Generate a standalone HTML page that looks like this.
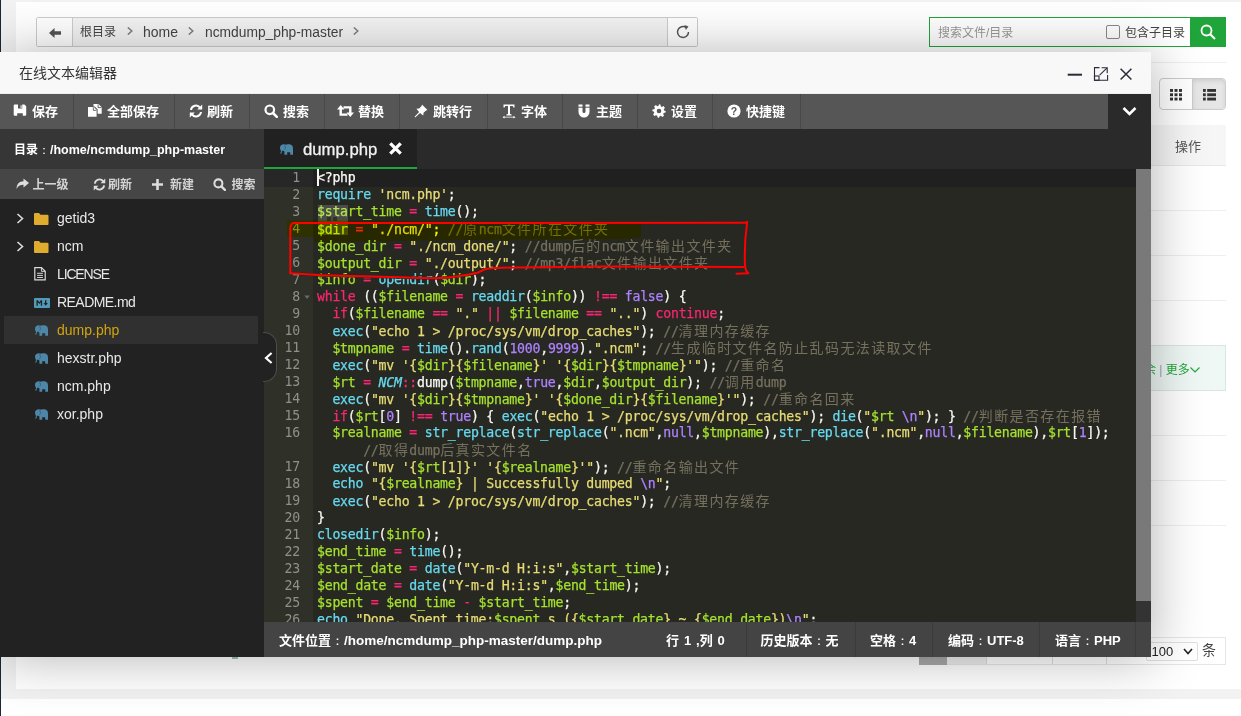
<!DOCTYPE html>
<html lang="zh-CN">
<head>
<meta charset="utf-8">
<title>在线文本编辑器</title>
<style>
*{box-sizing:border-box;margin:0;padding:0}
html,body{width:1241px;height:716px;overflow:hidden}
body{background:#fff;font-family:"Liberation Sans","Noto Sans CJK SC",sans-serif;font-size:12px;color:#333;position:relative}
.abs{position:absolute}
#leftstrip{left:0;top:0;width:1px;height:716px;background:#1d2733}
#pagebg{left:1px;top:0;width:1240px;height:699px;background:#f2f2f2}
#main{left:16px;top:2px;width:1225px;height:687px;background:#fff}
/* path bar */
#pathbar{left:36px;top:17px;width:662px;height:30px;border:1px solid #ccc;border-radius:2px;background:#f3f3f3}
#pathbar .back{left:0;top:0;width:36px;height:28px;background:#fff;border-right:1px solid #ccc}
#pathbar .refresh{right:0;top:0;width:30px;height:28px;background:#fff;border-left:1px solid #ccc}
#pathbar .crumb{top:0;height:28px;line-height:29px;font-size:12px;color:#444}
#search{left:929px;top:17px;width:297px;height:30px;border:1px solid #20a53a;background:#fff}
#search .ph{left:8px;top:0;line-height:30px;font-size:12px;color:#999}
#search .cb{left:176px;top:7px;width:14px;height:14px;border:1px solid #8a8a8a;border-radius:2px;background:#fff}
#search .lb{left:195px;top:0;line-height:30px;font-size:12px;color:#444}
#search .btn{right:-1px;top:-1px;width:36px;height:30px;background:#20a53a}
/* right column of page */
#viewbtn{left:1159px;top:78px;width:67px;height:32px;border:1px solid #ccc;border-radius:4px;background:#fff}
#viewbtn .a{left:0;top:0;width:33px;height:30px;border-right:1px solid #ccc}
#viewbtn .b{left:33px;top:0;width:32px;height:30px;background:#e6e6e6;border-radius:0 3px 3px 0;box-shadow:inset 0 2px 4px rgba(0,0,0,.1)}
#thead{left:1100px;top:125px;width:126px;height:41px;background:#f6f6f6;border-bottom:1px solid #e8e8e8}
.rowline{left:1100px;width:126px;height:1px;background:#eee}
#hover{left:1100px;top:345px;width:126px;height:46px;background:#eff8f5;border-top:1px solid #d6e9e1;border-bottom:1px solid #d6e9e1;border-right:1px solid #d6e9e1}
/* modal */
#modal{left:0;top:52px;width:1151px;height:605px;background:#222;box-shadow:1px 1px 50px rgba(0,0,0,.3)}
#mtitle{left:0;top:0;width:1151px;height:42px;background:#f8f8f8;border-bottom:1px solid #eee;font-size:14px;color:#333;line-height:42px;padding-left:19px}
#tool{left:0;top:42px;width:1108px;height:35px;background:#565656}
#tool .it{top:0;height:35px;border-right:1px solid #484848;color:#fff;font-size:13px;font-weight:bold;line-height:36px;white-space:nowrap}
#tool .it svg{position:absolute;left:12px;top:10px}
#tool .it span{position:absolute;top:0}
#side{left:0;top:77px;width:264px;height:528px;background:#222}
#sidehd{left:0;top:0;width:264px;height:40px;background:#363636;color:#fff;font-size:12px;font-weight:bold;line-height:43px;padding-left:14px;white-space:nowrap}
#sidetb{left:0;top:40px;width:264px;height:30px;background:#464646;color:#d4d4d4;font-size:12px;font-weight:bold;line-height:32px}
#sidetb span{position:absolute;top:0;white-space:nowrap}
.fi{left:4px;width:254px;height:28px;line-height:29px;font-size:14px;color:#e8e8e8;white-space:nowrap}
.fi span{position:absolute;left:53px;top:0}
.fi.sel{background:#303030}
.fi.sel span{color:#d2a50f}
#tabs{left:264px;top:77px;width:887px;height:40px;background:#2a2a2a}
#tab{left:0;top:0;width:153px;height:40px;background:#212121;border-bottom:2px solid #20a53a;color:#f2f2f2;font-size:16.700px;line-height:42px;-webkit-text-stroke:0.3px}
#editor{left:264px;top:116px;width:887px;height:454px;background:#272822;overflow:hidden}
#gutter{left:0;top:0;width:49px;height:454px;background:#2f3129}
#code,#nums{font-family:"DejaVu Sans Mono","Noto Sans CJK SC",monospace;font-size:13.2px;letter-spacing:-0.247px;line-height:17px;color:#f8f8f2}
#code div{white-space:pre}
#nums{left:0;top:1px;width:36px;text-align:right;color:#8f908a}
#code{left:53px;top:1px;-webkit-text-stroke:0.25px}
#code div,#nums div{height:17px}
.k{color:#f92672}.s{color:#e6db74}.v{color:#a6e22e}.f{color:#66d9ef}.n{color:#ae81ff}.c{color:#75715e}.cl{color:#66d9ef;font-style:italic}
.z{-webkit-text-stroke:0;font-weight:normal;font-size:14px;letter-spacing:1.4px;line-height:17px;font-family:"Noto Sans CJK SC",sans-serif}
#status{left:264px;top:570px;width:887px;height:35px;background:#444;color:#fff;font-size:13px;font-weight:bold;line-height:37px}
#status u,#sidehd u{text-decoration:none;font-family:"WenQuanYi Zen Hei",sans-serif}
#status em{font-style:normal}
#status span{position:absolute;top:0;white-space:nowrap}
#status i{position:absolute;top:0;width:1px;height:35px;background:#3a3a3a}
</style>
</head>
<body>
<div id="pagebg" class="abs"></div>
<div id="leftstrip" class="abs"></div>
<div id="main" class="abs"></div>

<div id="pathbar" class="abs">
  <div class="back abs"><svg class="abs" style="left:12px;top:9.500px" width="12" height="10" viewBox="0 0 13 11" preserveAspectRatio="none"><path d="M0 5.5 L6 0 V3.6 H13 V7.4 H6 V11 Z" fill="#555"/></svg></div>
  <div class="crumb abs" style="left:43px">根目录</div>
  <svg class="abs" style="left:90px;top:9.300px" width="6" height="8" viewBox="0 0 6 8"><path d="M0.800 0.400 L4.800 4 L0.800 7.600" fill="none" stroke="#808080" stroke-width="1.500"/></svg>
  <div class="crumb abs" style="left:106px;font-size:14px">home</div>
  <svg class="abs" style="left:151px;top:9.300px" width="6" height="8" viewBox="0 0 6 8"><path d="M0.800 0.400 L4.800 4 L0.800 7.600" fill="none" stroke="#808080" stroke-width="1.500"/></svg>
  <div class="crumb abs" style="left:168px;font-size:13.800px">ncmdump_php-master</div>
  <svg class="abs" style="left:315.500px;top:9.300px" width="6" height="8" viewBox="0 0 6 8"><path d="M0.800 0.400 L4.800 4 L0.800 7.600" fill="none" stroke="#808080" stroke-width="1.500"/></svg>
  <div class="refresh abs"><svg class="abs" style="left:7px;top:6px" width="16" height="16" viewBox="0 0 16 16"><path d="M13.5 8 A5.5 5.5 0 1 1 11.2 3.5" fill="none" stroke="#555" stroke-width="1.5"/><path d="M9.5 1 L13.5 2.6 L10.8 6 Z" fill="#555"/></svg></div>
</div>

<div id="search" class="abs">
  <div class="ph abs">搜索文件/目录</div>
  <div class="cb abs"></div>
  <div class="lb abs">包含子目录</div>
  <div class="btn abs"><svg class="abs" style="left:10px;top:7px" width="16" height="16" viewBox="0 0 16 16"><circle cx="6.5" cy="6.5" r="5" fill="none" stroke="#fff" stroke-width="1.8"/><path d="M10.2 10.2 L15 15" stroke="#fff" stroke-width="2"/></svg></div>
</div>

<div id="viewbtn" class="abs">
  <div class="a abs"><svg class="abs" style="left:10px;top:10px" width="12" height="11.500" viewBox="0 0 12 12" preserveAspectRatio="none"><g fill="#333"><rect x="0" y="0" width="3" height="3"/><rect x="4.5" y="0" width="3" height="3"/><rect x="9" y="0" width="3" height="3"/><rect x="0" y="4.5" width="3" height="3"/><rect x="4.5" y="4.5" width="3" height="3"/><rect x="9" y="4.5" width="3" height="3"/><rect x="0" y="9" width="3" height="3"/><rect x="4.5" y="9" width="3" height="3"/><rect x="9" y="9" width="3" height="3"/></g></svg></div>
  <div class="b abs"><svg class="abs" style="left:10px;top:10px" width="13" height="11.500" viewBox="0 0 14 12" preserveAspectRatio="none"><g fill="#333"><rect x="0" y="0" width="3" height="3"/><rect x="4.5" y="0" width="9.5" height="3"/><rect x="0" y="4.5" width="3" height="3"/><rect x="4.5" y="4.5" width="9.5" height="3"/><rect x="0" y="9" width="3" height="3"/><rect x="4.5" y="9" width="9.5" height="3"/></g></svg></div>
</div>
<div class="abs" style="left:1100px;top:62px;width:126px;height:1px;background:#eee"></div>
<div id="thead" class="abs"><div class="abs" style="left:75px;top:0;line-height:44px;font-size:13px;color:#555">操作</div></div>
<div class="rowline abs" style="top:210px"></div>
<div class="rowline abs" style="top:255px"></div>
<div class="rowline abs" style="top:300px"></div>
<div id="hover" class="abs"><div class="abs" style="left:44px;top:0;line-height:48px;font-size:12px;color:#20a53a;white-space:nowrap">余 <span style="color:#8ab">|</span> 更多</div><svg class="abs" style="left:90px;top:21px" width="10" height="6" viewBox="0 0 10 6"><path d="M0.5 0.5 L5 5 L9.500 0.500" fill="none" stroke="#20a53a" stroke-width="1.1"/></svg></div>
<div class="rowline abs" style="top:435px"></div>
<div class="rowline abs" style="top:480px"></div>
<div class="rowline abs" style="top:525px"></div>
<!-- pagination remnants -->
<div class="abs" style="left:919px;top:637px;width:307px;height:28px;border:1px solid #e6e6e6;background:#fff"></div>
<div class="abs" style="left:919px;top:637px;width:28px;height:28px;background:#a8a8a8"></div>
<div class="abs" style="left:947px;top:657px;width:40px;height:7px;background:#eee;border-right:1px solid #ddd"></div>
<div class="abs" style="left:987px;top:657px;width:66px;height:7px;border-right:1px solid #ddd"></div>
<div class="abs" style="left:1053px;top:657px;width:54px;height:7px;border-right:1px solid #ddd"></div>
<div class="abs" style="left:1146px;top:642px;width:52px;height:19px;border:1px solid #e0e0e0;border-radius:2px;background:#fff"><div class="abs" style="left:4.500px;top:0;line-height:17px;font-size:13px;color:#222">100</div><svg class="abs" style="left:36px;top:5px" width="10" height="7" viewBox="0 0 10 7"><path d="M1 1 L5 5.5 L9 1" fill="none" stroke="#222" stroke-width="1.6"/></svg></div>
<div class="abs" style="left:1202px;top:640px;line-height:21px;font-size:14px;color:#444">条</div>
<div class="abs" style="left:232px;top:655px;width:6px;height:4px;background:#5a9a8a;opacity:.6"></div>

<div id="modal" class="abs">
  <div id="mtitle" class="abs">在线文本编辑器</div>
  <!-- window buttons -->
  <svg class="abs" style="left:1067px;top:14px" width="70" height="16" viewBox="0 0 70 16">
    <rect x="0.7" y="7.700" width="14.300" height="2" fill="#2a2a3a"/>
    <g fill="none" stroke="#2a2a3a" stroke-width="1.1"><path d="M32.5 1.600 H27.500 V14.300 H40.600 V9"/><rect x="27.500" y="10" width="4.500" height="4.300"/><path d="M32.600 9.200 L39.800 2.200"/><path d="M34.600 1.800 H40.200 V7.300"/></g>
    <path d="M53.600 2.700 L64.400 13.500 M64.400 2.700 L53.600 13.500" stroke="#2a2a3a" stroke-width="1.500"/>
  </svg>

  <div id="tool" class="abs">
    <div class="it abs" style="left:0;width:74px"><svg width="14" height="14" viewBox="0 0 14 14" style="left:13px"><path d="M1.7 0.5 H11.400 L13.200 2.300 V10.800 Q13.200 11.800 12.200 11.800 H1.700 Q0.700 11.800 0.700 10.800 V1.500 Q0.700 0.500 1.700 0.500 Z M5 0.500 V4.600 H9.200 V0.500 Z M7.600 1.200 H8.600 V3.900 H7.600 Z M4.200 9.200 V11.800 H9.800 V9.200 Z" fill="#fff" fill-rule="evenodd"/></svg><span style="left:32px">保存</span></div>
    <div class="it abs" style="left:74px;width:101px"><svg width="14" height="14" viewBox="0 0 14 14" style="left:14px"><path d="M0 3 H5.800 L8.600 5.800 V12.800 H0 Z M5.500 0 H10.500 L13.700 3.200 V9.800 H9.600 V5.300 L6.700 2.400 H5.500 Z" fill="#fff"/><path d="M5.300 3.300 V6.300 H8.300 M10.100 0.400 V3.600 H13.400" stroke="#565656" stroke-width="0.900" fill="none"/></svg><span style="left:33px">全部保存</span></div>
    <div class="it abs" style="left:175px;width:75px"><svg width="14" height="14" viewBox="0 0 14 14" style="left:14px"><g fill="none" stroke="#fff" stroke-width="2"><path d="M2 6 A5 5 0 0 1 11 3.6"/><path d="M12 8 A5 5 0 0 1 3 10.4"/></g><path d="M13.2 0.6 V5.6 H8.2 Z M0.8 13.4 V8.4 H5.8 Z" fill="#fff"/></svg><span style="left:32px">刷新</span></div>
    <div class="it abs" style="left:250px;width:75px"><svg width="14" height="14" viewBox="0 0 14 14" style="left:14px"><circle cx="5.8" cy="5.8" r="4.3" fill="none" stroke="#fff" stroke-width="2.2"/><path d="M9 9 L12.8 12.8" stroke="#fff" stroke-width="2.6" stroke-linecap="round"/></svg><span style="left:33px">搜索</span></div>
    <div class="it abs" style="left:325px;width:75px"><svg width="17" height="14" viewBox="0 0 17 14" style="left:12px"><path d="M0 5.500 L3.700 1 L7.400 5.500 H4.900 V9.400 H10.500 V11.800 H2.500 V5.500 Z M6.500 2.200 H14.500 V8.500 H17 L13.300 13 L9.600 8.500 H12.100 V4.600 H6.500 Z" fill="#fff"/></svg><span style="left:33px">替换</span></div>
    <div class="it abs" style="left:400px;width:88px"><svg width="14" height="14" viewBox="0 0 14 14" style="left:14px"><path d="M8 0.5 L13.5 6 L12 6.4 L9.6 8.8 L9.2 11.6 L6 8.9 L1.2 13.4 L0.6 12.8 L5.1 8 L2.4 4.8 L5.2 4.4 L7.6 2 Z" fill="#fff"/></svg><span style="left:33px">跳转行</span></div>
    <div class="it abs" style="left:488px;width:75px"><svg width="14" height="15" viewBox="0 0 14 15" style="left:14px;top:10px"><path d="M1.5 0.5 H12.5 V3.6 H11.4 L10.8 2 H8 V10 L9.6 10.6 V11.4 H4.4 V10.6 L6 10 V2 H3.2 L2.6 3.6 H1.5 Z" fill="#fff"/><path d="M0.5 13.2 L2.5 11.8 V12.8 H11.5 V11.8 L13.5 13.2 L11.5 14.6 V13.6 H2.5 V14.6 Z" fill="#fff"/></svg><span style="left:33px">字体</span></div>
    <div class="it abs" style="left:563px;width:75px"><svg width="12" height="14" viewBox="0 0 12 14" style="left:15px"><path d="M0.5 0.5 H4.5 V7.5 A1.5 1.5 0 0 0 7.5 7.500 V0.5 H11.5 V8 A5.5 5.5 0 0 1 0.5 8 Z" fill="#fff"/><path d="M0 3.2 H12" stroke="#565656" stroke-width="1"/></svg><span style="left:33px">主题</span></div>
    <div class="it abs" style="left:638px;width:75px"><svg width="14" height="14" viewBox="0 0 14 14" style="left:14px"><path d="M7 0.3 L8.4 0.5 L8.8 2.3 L9.9 2.9 L11.6 2.1 L12.9 3.9 L11.8 5.2 L12 6.4 L13.7 7 L13.5 8.6 L11.8 9 L11.2 10 L12 11.7 L10.3 12.9 L8.9 11.8 L7.8 12 L7 13.7 L5.6 13.5 L5.2 11.8 L4.1 11.2 L2.4 12 L1.1 10.3 L2.2 8.9 L2 7.8 L0.3 7 L0.5 5.6 L2.3 5.2 L2.9 4.1 L2.1 2.4 L3.9 1.1 L5.2 2.2 L6.4 2 Z M7 4.7 A2.3 2.3 0 1 0 7 9.3 A2.3 2.3 0 1 0 7 4.7 Z" fill="#fff" fill-rule="evenodd"/></svg><span style="left:33px">设置</span></div>
    <div class="it abs" style="left:713px;width:88px"><svg width="14" height="14" viewBox="0 0 14 14" style="left:14px"><circle cx="7" cy="7" r="6.6" fill="#fff"/><text x="7" y="11" font-size="10.500" font-weight="bold" text-anchor="middle" fill="#565656" font-family="Liberation Sans, sans-serif">?</text></svg><span style="left:33px">快捷键</span></div>
  </div>
  <div class="abs" style="left:1108px;top:42px;width:43px;height:35px;background:#2a2a2a"></div>
  <svg class="abs" style="left:1122px;top:54px" width="15" height="11" viewBox="0 0 15 11"><path d="M1.5 2 L7.500 8 L13.500 2" fill="none" stroke="#fff" stroke-width="2.600"/></svg>

  <div id="side" class="abs">
    <div id="sidehd" class="abs">目录<u>：</u><span style="font-size:12.5px">/home/ncmdump_php-master</span></div>
    <div id="sidetb" class="abs">
      <svg class="abs" style="left:16px;top:9px" width="13" height="12" viewBox="0 0 13 12"><path d="M7.500 0.5 L13 5 L7.500 9.500 V6.800 C4 6.800 2 8 0.5 11 C0.700 6 3 3.400 7.500 3.200 Z" fill="#ddd"/></svg><span style="left:32.5px">上一级</span>
      <svg class="abs" style="left:93px;top:9px" width="13" height="13" viewBox="0 0 14 14"><g fill="none" stroke="#ddd" stroke-width="2"><path d="M2 6 A5 5 0 0 1 11 3.600"/><path d="M12 8 A5 5 0 0 1 3 10.400"/></g><path d="M13.200 0.600 V5.600 H8.200 Z M0.800 13.400 V8.400 H5.800 Z" fill="#ddd"/></svg><span style="left:108px">刷新</span>
      <svg class="abs" style="left:152px;top:10px" width="11" height="11" viewBox="0 0 11 11"><path d="M4.200 0 H6.800 V4.200 H11 V6.800 H6.800 V11 H4.200 V6.800 H0 V4.200 H4.200 Z" fill="#ddd"/></svg><span style="left:170px">新建</span>
      <svg class="abs" style="left:213px;top:9px" width="13" height="13" viewBox="0 0 14 14"><circle cx="5.800" cy="5.800" r="4.300" fill="none" stroke="#ddd" stroke-width="2.200"/><path d="M9 9 L12.800 12.800" stroke="#ddd" stroke-width="2.600" stroke-linecap="round"/></svg><span style="left:231.5px">搜索</span>
    </div>
    <div id="files">
<div class="fi abs" style="top:75px"><svg class="abs" style="left:12px;top:8.500px" width="9" height="11" viewBox="0 0 9 11"><path d="M1.500 1 L6.500 5.500 L1.500 10" fill="none" stroke="#ddd" stroke-width="1.600"/></svg><svg class="abs" style="left:30px;top:8.500px" width="14.500" height="12" viewBox="0 0 16 13" preserveAspectRatio="none"><path d="M0 1.200 Q0 0 1.200 0 H5.500 L7.200 2 H14.800 Q16 2 16 3.200 V11.800 Q16 13 14.800 13 H1.200 Q0 13 0 11.800 Z" fill="#dfac30"/></svg><span>getid3</span></div>
<div class="fi abs" style="top:103px"><svg class="abs" style="left:12px;top:8.500px" width="9" height="11" viewBox="0 0 9 11"><path d="M1.500 1 L6.500 5.500 L1.500 10" fill="none" stroke="#ddd" stroke-width="1.600"/></svg><svg class="abs" style="left:30px;top:8.500px" width="14.500" height="12" viewBox="0 0 16 13" preserveAspectRatio="none"><path d="M0 1.200 Q0 0 1.200 0 H5.500 L7.200 2 H14.800 Q16 2 16 3.200 V11.800 Q16 13 14.800 13 H1.200 Q0 13 0 11.800 Z" fill="#dfac30"/></svg><span>ncm</span></div>
<div class="fi abs" style="top:131px"><svg class="abs" style="left:30px;top:7px" width="12" height="13.500" viewBox="0 0 12 14"><path d="M0.600 0.600 H7.500 L11.400 4.500 V13.400 H0.600 Z" fill="none" stroke="#ddd" stroke-width="1.200"/><path d="M7.500 0.600 V4.500 H11.400" fill="none" stroke="#ddd" stroke-width="1"/><path d="M3 6.500 H9 M3 8.700 H9 M3 10.900 H9" stroke="#ddd" stroke-width="1"/></svg><span style="letter-spacing:-1.15px">LICENSE</span></div>
<div class="fi abs" style="top:159px"><svg class="abs" style="left:30px;top:9.500px" width="16" height="10" viewBox="0 0 16 10"><rect x="0" y="0" width="16" height="10" rx="1" fill="#519aba"/><path d="M2.500 7.700 V2.300 H3.800 L5.300 4.300 L6.800 2.300 H8.100 V7.700 H6.800 V4.300 L5.300 6.100 L3.800 4.300 V7.700 Z M11 2.300 H12.400 V5 H13.900 L11.700 7.800 L9.500 5 H11 Z" fill="#222"/></svg><span style="letter-spacing:-0.55px">README.md</span></div>
<div class="fi abs sel" style="top:187px"><svg class="abs" style="left:29.500px;top:9px" width="14" height="11" viewBox="0 0 14 11"><path d="M1 4 C1 1.500 2.500 0.300 5 0.300 C6 0.300 6.500 0.500 7 0.800 C8 0.300 9.500 0.200 10.500 0.300 C12.800 0.500 14 2 14 4.500 V10.700 H11.200 V8.200 H8.200 V10.700 H5.400 V7.600 C4.800 7.400 4.300 7 4 6.600 C3.600 7 3.200 7.200 2.800 7.200 V8.300 C2.800 9.600 1.600 9.800 0.900 9.200 L1.400 8.500 C1.700 8.700 1.900 8.500 1.900 8.200 V6.500 C1.300 6 1 5.200 1 4 Z" fill="#4d86a6"/><path d="M5.200 1.500 C6.800 2 7 4.500 5.600 5.600" fill="none" stroke="#2d566e" stroke-width="0.700"/></svg><span>dump.php</span></div>
<div class="fi abs" style="top:215px"><svg class="abs" style="left:29.500px;top:9px" width="14" height="11" viewBox="0 0 14 11"><path d="M1 4 C1 1.500 2.500 0.300 5 0.300 C6 0.300 6.500 0.500 7 0.800 C8 0.300 9.500 0.200 10.500 0.300 C12.800 0.500 14 2 14 4.500 V10.700 H11.200 V8.200 H8.200 V10.700 H5.400 V7.600 C4.800 7.400 4.300 7 4 6.600 C3.600 7 3.200 7.200 2.800 7.200 V8.300 C2.800 9.600 1.600 9.800 0.900 9.200 L1.400 8.500 C1.700 8.700 1.900 8.500 1.900 8.200 V6.500 C1.300 6 1 5.200 1 4 Z" fill="#4d86a6"/><path d="M5.200 1.500 C6.800 2 7 4.500 5.600 5.600" fill="none" stroke="#2d566e" stroke-width="0.700"/></svg><span>hexstr.php</span></div>
<div class="fi abs" style="top:243px"><svg class="abs" style="left:29.500px;top:9px" width="14" height="11" viewBox="0 0 14 11"><path d="M1 4 C1 1.500 2.500 0.300 5 0.300 C6 0.300 6.500 0.500 7 0.800 C8 0.300 9.500 0.200 10.500 0.300 C12.800 0.500 14 2 14 4.500 V10.700 H11.200 V8.200 H8.200 V10.700 H5.400 V7.600 C4.800 7.400 4.300 7 4 6.600 C3.600 7 3.200 7.200 2.800 7.200 V8.300 C2.800 9.600 1.600 9.800 0.900 9.200 L1.400 8.500 C1.700 8.700 1.900 8.500 1.900 8.200 V6.500 C1.300 6 1 5.200 1 4 Z" fill="#4d86a6"/><path d="M5.200 1.500 C6.800 2 7 4.500 5.600 5.600" fill="none" stroke="#2d566e" stroke-width="0.700"/></svg><span>ncm.php</span></div>
<div class="fi abs" style="top:271px"><svg class="abs" style="left:29.500px;top:9px" width="14" height="11" viewBox="0 0 14 11"><path d="M1 4 C1 1.500 2.500 0.300 5 0.300 C6 0.300 6.500 0.500 7 0.800 C8 0.300 9.500 0.200 10.500 0.300 C12.800 0.500 14 2 14 4.500 V10.700 H11.200 V8.200 H8.200 V10.700 H5.400 V7.600 C4.800 7.400 4.300 7 4 6.600 C3.600 7 3.200 7.200 2.800 7.200 V8.300 C2.800 9.600 1.600 9.800 0.900 9.200 L1.400 8.500 C1.700 8.700 1.900 8.500 1.900 8.200 V6.500 C1.300 6 1 5.200 1 4 Z" fill="#4d86a6"/><path d="M5.200 1.500 C6.800 2 7 4.500 5.600 5.600" fill="none" stroke="#2d566e" stroke-width="0.700"/></svg><span>xor.php</span></div>
</div>
  </div>

  <div id="editor" class="abs">
    <div id="gutter" class="abs"></div>
    <div class="abs" style="left:872px;top:0;width:15px;height:454px;background:#333"></div>
    <div class="abs" style="left:872px;top:0;width:15px;height:433px;background:#797979"></div>
    <div class="abs" style="left:0;top:1px;width:872px;height:17.500px;background:#202020"></div>
    <div class="abs" style="left:0;top:1px;width:49px;height:17.500px;background:#272727"></div>
    <div id="nums" class="abs">
<div>1</div>
<div>2</div>
<div>3</div>
<div>4</div>
<div>5</div>
<div>6</div>
<div>7</div>
<div>8</div>
<div>9</div>
<div>10</div>
<div>11</div>
<div>12</div>
<div>13</div>
<div>14</div>
<div>15</div>
<div>16</div>
<div></div>
<div>17</div>
<div>18</div>
<div>19</div>
<div>20</div>
<div>21</div>
<div>22</div>
<div>23</div>
<div>24</div>
<div>25</div>
<div>26</div>
</div>
    <div id="code" class="abs">
<div>&lt;?php</div>
<div><span class="f">require</span> <span class="s">'ncm.php'</span>;</div>
<div><span class="v">$start_time</span> <span class="k">=</span> <span class="f">time</span>();</div>
<div><span class="v">$dir</span> <span class="k">=</span> <span class="s">"./ncm/"</span>; <span class="c">//<b class="z">原</b>ncm<b class="z">文件所在文件夹</b></span></div>
<div><span class="v">$done_dir</span> <span class="k">=</span> <span class="s">"./ncm_done/"</span>; <span class="c">//dump<b class="z">后的</b>ncm<b class="z">文件输出文件夹</b></span></div>
<div><span class="v">$output_dir</span> <span class="k">=</span> <span class="s">"./output/"</span>; <span class="c">//mp3/flac<b class="z">文件输出文件夹</b></span></div>
<div><span class="v">$info</span> <span class="k">=</span> <span class="f">opendir</span>(<span class="v">$dir</span>);</div>
<div><span class="k">while</span> ((<span class="v">$filename</span> <span class="k">=</span> <span class="f">readdir</span>(<span class="v">$info</span>)) <span class="k">!==</span> <span class="n">false</span>) {</div>
<div>  <span class="k">if</span>(<span class="v">$filename</span> <span class="k">==</span> <span class="s">"."</span> <span class="k">||</span> <span class="v">$filename</span> <span class="k">==</span> <span class="s">".."</span>) <span class="k">continue</span>;</div>
<div>  <span class="f">exec</span>(<span class="s">"echo 1 &gt; /proc/sys/vm/drop_caches"</span>); <span class="c">//<b class="z">清理内存缓存</b></span></div>
<div>  <span class="v">$tmpname</span> <span class="k">=</span> <span class="f">time</span>().<span class="f">rand</span>(<span class="n">1000</span>,<span class="n">9999</span>).<span class="s">".ncm"</span>; <span class="c">//<b class="z">生成临时文件名防止乱码无法读取文件</b></span></div>
<div>  <span class="f">exec</span>(<span class="s">"mv '{</span><span class="v">$dir</span><span class="s">}{</span><span class="v">$filename</span><span class="s">}' '{</span><span class="v">$dir</span><span class="s">}{</span><span class="v">$tmpname</span><span class="s">}'"</span>); <span class="c">//<b class="z">重命名</b></span></div>
<div>  <span class="v">$rt</span> <span class="k">=</span> <span class="cl">NCM</span><span class="k">::</span>dump(<span class="v">$tmpname</span>,<span class="n">true</span>,<span class="v">$dir</span>,<span class="v">$output_dir</span>); <span class="c">//<b class="z">调用</b>dump</span></div>
<div>  <span class="f">exec</span>(<span class="s">"mv '{</span><span class="v">$dir</span><span class="s">}{</span><span class="v">$tmpname</span><span class="s">}' '{</span><span class="v">$done_dir</span><span class="s">}{</span><span class="v">$filename</span><span class="s">}'"</span>); <span class="c">//<b class="z">重命名回来</b></span></div>
<div>  <span class="k">if</span>(<span class="v">$rt</span>[<span class="n">0</span>] <span class="k">!==</span> <span class="n">true</span>) { <span class="f">exec</span>(<span class="s">"echo 1 &gt; /proc/sys/vm/drop_caches"</span>); <span class="f">die</span>(<span class="s">"</span><span class="v">$rt</span><span class="s"> </span><span class="n">\n</span><span class="s">"</span>); } <span class="c">//<b class="z">判断是否存在报错</b></span></div>
<div>  <span class="v">$realname</span> <span class="k">=</span> <span class="f">str_replace</span>(<span class="f">str_replace</span>(<span class="s">".ncm"</span>,<span class="n">null</span>,<span class="v">$tmpname</span>),<span class="f">str_replace</span>(<span class="s">".ncm"</span>,<span class="n">null</span>,<span class="v">$filename</span>),<span class="v">$rt</span>[<span class="n">1</span>]);</div>
<div>      <span class="c">//<b class="z">取得</b>dump<b class="z">后真实文件名</b></span></div>
<div>  <span class="f">exec</span>(<span class="s">"mv '{</span><span class="v">$rt</span><span class="s">[1]}' '{</span><span class="v">$realname</span><span class="s">}'"</span>); <span class="c">//<b class="z">重命名输出文件</b></span></div>
<div>  <span class="f">echo</span> <span class="s">"{</span><span class="v">$realname</span><span class="s">} | Successfully dumped </span><span class="n">\n</span><span class="s">"</span>;</div>
<div>  <span class="f">exec</span>(<span class="s">"echo 1 &gt; /proc/sys/vm/drop_caches"</span>); <span class="c">//<b class="z">清理内存缓存</b></span></div>
<div>}</div>
<div><span class="f">closedir</span>(<span class="v">$info</span>);</div>
<div><span class="v">$end_time</span> <span class="k">=</span> <span class="f">time</span>();</div>
<div><span class="v">$start_date</span> <span class="k">=</span> <span class="f">date</span>(<span class="s">"Y-m-d H:i:s"</span>,<span class="v">$start_time</span>);</div>
<div><span class="v">$end_date</span> <span class="k">=</span> <span class="f">date</span>(<span class="s">"Y-m-d H:i:s"</span>,<span class="v">$end_time</span>);</div>
<div><span class="v">$spent</span> <span class="k">=</span> <span class="v">$end_time</span> <span class="k">-</span> <span class="v">$start_time</span>;</div>
<div><span class="f">echo</span> <span class="s">"Done. Spent time:</span><span class="v">$spent</span><span class="s"> s ({</span><span class="v">$start_date</span><span class="s">} ~ {</span><span class="v">$end_date</span><span class="s">})</span><span class="n">\n</span><span class="s">"</span>;</div>
</div>
    <div class="abs" style="left:53px;top:1px;width:2px;height:17px;background:#f8f8f0"></div>
    <svg class="abs" style="left:39.500px;top:127px" width="7" height="5.500" viewBox="0 0 8 6"><path d="M0.5 0.500 H6.500 L3.500 4.500 Z" fill="#6b6c66"/></svg>
    <div class="abs" style="left:54px;top:37px;width:30px;height:30px;background:rgba(255,255,255,.17)"></div>
    <div class="abs" style="left:63px;top:49px;width:4px;height:4px;background:rgba(0,0,0,.35)"></div>
    <div class="abs" style="left:69px;top:49px;width:4px;height:4px;background:rgba(0,0,0,.35)"></div>
    <div class="abs" style="left:23.0px;top:52.0px;width:354.0px;height:22.0px;background:#ffff00;mix-blend-mode:multiply;clip-path:polygon(0.0px 0.0px,354.0px 3.0px,354.0px 17.5px,338.0px 19.0px,133.0px 20.5px,27.0px 22.0px,27.0px 17.0px,0.0px 17.0px)"></div>
    <svg class="abs" style="left:0;top:0" width="887" height="454" viewBox="264 168 887 454">
      <path d="M300,274 L322.700,275.200 L361.400,276.300 L400,277.200 L430,278.200 Q446,278.600 459.300,275.900 Q470,274.500 477.400,272.700 Q481,271.300 484,269.600" fill="none" stroke="#272822" stroke-width="3"/>
      <g fill="none" stroke="#ff0000" stroke-width="2" stroke-linejoin="round" stroke-linecap="round">
        <path d="M290.3,273.300 L290.300,229 Q290.300,223.200 294,223 L747,222.800"/>
        <path d="M747.200,221.800 C745.300,235 744.300,250 745,265.500 C745.300,270 746.500,272 748.300,273.200 L736.500,273.700"/>
        <path d="M290.3,273.300 L322.700,275.200 L361.400,276.300 L400,277.200 L430,278.200 Q446,278.600 459.300,275.900 Q470,274.500 477.400,272.700 Q481,271.300 484,269.600 Q488,268.300 494,267.900 L517,267.500 L600,266.600 L743.500,267.100"/>
      </g>
    </svg>
  </div>
  <div id="tabs" class="abs">
    <div id="tab" class="abs"><svg class="abs" style="left:15px;top:14.500px" width="14" height="11" viewBox="0 0 14 11"><path d="M1 4 C1 1.500 2.500 0.300 5 0.300 C6 0.300 6.500 0.500 7 0.800 C8 0.300 9.500 0.200 10.500 0.300 C12.800 0.500 14 2 14 4.500 V10.700 H11.200 V8.200 H8.200 V10.700 H5.400 V7.600 C4.800 7.400 4.300 7 4 6.600 C3.600 7 3.200 7.200 2.800 7.200 V8.300 C2.800 9.600 1.600 9.800 0.900 9.200 L1.400 8.500 C1.700 8.700 1.900 8.500 1.900 8.200 V6.500 C1.300 6 1 5.200 1 4 Z" fill="#4d86a6"/><path d="M5.200 1.500 C6.800 2 7 4.500 5.600 5.600" fill="none" stroke="#2d566e" stroke-width="0.700"/></svg><span class="abs" style="left:39px;top:0">dump.php</span>
      <svg class="abs" style="left:124.500px;top:13px" width="13" height="13" viewBox="0 0 13 13"><path d="M1.300 1.300 L11.700 11.700 M11.700 1.300 L1.300 11.700" stroke="#fff" stroke-width="3.300"/></svg>
    </div>
  </div>

  <div class="abs" style="left:263px;top:280px;width:14px;height:50px;background:#222;border:1px solid #4c4c4c;border-left:none;border-radius:0 13px 13px 0"><svg class="abs" style="left:1px;top:19px" width="9" height="12" viewBox="0 0 9 12"><path d="M7.600 1 L2 6 L7.600 11" fill="none" stroke="#fff" stroke-width="2.200"/></svg></div>
  <div id="status" class="abs">
<span style="left:15px">文件位置<u>：</u><em style="font-size:13.5px">/home/ncmdump_php-master/dump.php</em></span>
<span style="left:402px;word-spacing:1.3px">行 1 ,列 0</span>
<span style="left:496.5px">历史版本<u>：</u>无</span><i style="left:482px"></i>
<span style="left:606px">空格<u>：</u>4</span><i style="left:591px"></i>
<span style="left:684px">编码<u>：</u>UTF-8</span><i style="left:668px"></i>
<span style="left:791px">语言<u>：</u>PHP</span><i style="left:775px"></i><i style="left:871px"></i>
</div>
</div>
</body>
</html>
